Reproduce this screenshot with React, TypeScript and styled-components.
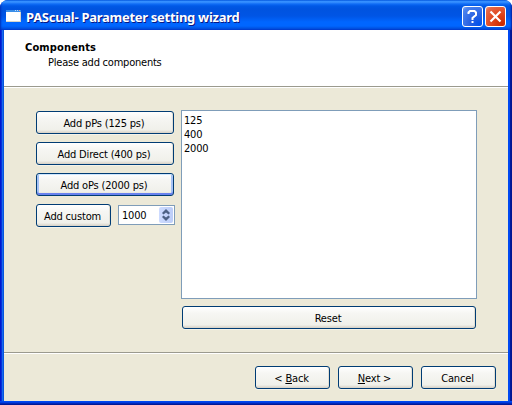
import React from "react";
import styled, { createGlobalStyle, css } from "styled-components";

const Global = createGlobalStyle`
  *, *::before, *::after { box-sizing: border-box; }
  body { margin: 0; background: #fff; }
`;

const uiFont = css`
  font-family: "DejaVu Sans Condensed", "DejaVu Sans", sans-serif;
  font-stretch: condensed;
  font-size: 11px;
  line-height: 14px;
  letter-spacing: -0.17px;
  color: #000;
`;

const Window = styled.div`
  ${uiFont}
  width: 512px;
  height: 405px;
  display: flex;
  flex-direction: column;
  overflow: hidden;
  border-radius: 8px 8px 0 0;
  padding: 0 4px 4px;
  background:
    linear-gradient(180deg, #0048f1 0, #0048f1 1px, #0030d0 2px, #001ea0 3px, #00138c 4px) 0 100% / 100% 4px no-repeat,
    linear-gradient(90deg, #0019cf 0, #0019cf 1px, #0831d9 1px, #0831d9 2px, #166aee 2px, #166aee 3px, #0855dd 3px, #0855dd 508px, #0048f1 508px, #0048f1 510px, #001ea0 510px, #00138c 512px);
`;

const TitleBar = styled.header`
  flex: none;
  height: 30px;
  margin: 0 -4px;
  padding: 0 6px;
  display: flex;
  align-items: center;
  background: linear-gradient(180deg, #0058e0 0, #2f8cff 1px, #3a92ff 2px, #0f6cf5 4px, #0058e6 6px, #0053df 9px, #0055e5 16px, #0066ff 22px, #0066ff 26px, #0055e5 28px, #003dcf 30px);
  box-shadow: inset 2px 0 2px -1px #0030b8, inset -2px 0 2px -1px #001ea0;
`;

const WindowIcon = styled.svg`
  margin-top: 2px;
`;

const Title = styled.h1`
  margin: 3px auto 0 5px;
  font: bold 13px/18px "Noto Sans", sans-serif;
  font-stretch: condensed;
  letter-spacing: -0.28px;
  white-space: nowrap;
  color: #fff;
  text-shadow: 1px 1px #0a1883;
`;

const CaptionButton = styled.span<{ $close?: boolean }>`
  width: 21px;
  height: 21px;
  margin: 3px 0 0 2px;
  border: 1px solid #fff;
  border-radius: 3px;
  background: ${(p) =>
    p.$close
      ? "radial-gradient(circle at 85% 90%, #c92a00 0, #df4218 40%, #e66847 85%, #f0a08a 100%)"
      : "radial-gradient(circle at 85% 90%, #0052ed 0, #2861e2 40%, #4b83ee 85%, #8db0f8 100%)"};
  svg { display: block; }
`;

const Heading = styled.section`
  flex: none;
  height: 56px;
  padding: 10px 0 0 21px;
  background: #fff;
`;

const HeadingTitle = styled.h2`
  margin: 0;
  font-size: 11px;
  line-height: 15px;
  font-weight: bold;
  letter-spacing: 0.14px;
`;

const Subtitle = styled.p`
  margin: 0;
  padding: 1px 0 0 23px;
  letter-spacing: -0.22px;
`;

const Body = styled.main`
  flex: none;
  height: 267px;
  padding: 23px 31px 0 32px;
  display: flex;
  gap: 6px;
  background: #ece9d8;
  border-top: 1px solid #9b9a8e;
  border-bottom: 1px solid #9b9a8e;
  box-shadow: inset 0 1px #fff;
`;

const AddColumn = styled.div`
  width: 139px;
  padding-top: 1px;
  display: flex;
  flex-direction: column;
  gap: 8px;
`;

const Button = styled.button<{ $width: number; $focused?: boolean }>`
  ${uiFont}
  flex: none;
  width: ${(p) => p.$width}px;
  height: 23px;
  padding: 2px 2px 0 0;
  border: 1px solid #003c74;
  border-radius: 3px;
  background: linear-gradient(180deg, #fff, #f6f6f3 30%, #f0f0ea 85%, #d6d0c5);
  box-shadow: ${(p) =>
    p.$focused
      ? "inset 0 1px #cee7ff, inset 0 -2px #6982ee, inset 2px 0 #a6c2f5, inset -2px 0 #a6c2f5"
      : "inset -1px 0 #e2dfd4, 0 1px #f5f3e9"};
  white-space: nowrap;
`;

const CustomRow = styled.div`
  display: flex;
  align-items: center;
  justify-content: space-between;
`;

const SpinBox = styled.div`
  width: 57px;
  height: 20px;
  margin-top: -1px;
  padding: 1px 1px 1px 3px;
  display: flex;
  align-items: center;
  justify-content: space-between;
  border: 1px solid #7f9db9;
  background: #fff;
`;

const SpinValue = styled.span`
  padding-top: 2px;
`;

const SpinArrows = styled.span`
  width: 14px;
  height: 16px;
  border-radius: 2px;
  background: linear-gradient(90deg, #cddbff, #bccdf8);
  svg { display: block; }
`;

const ListColumn = styled.div`
  width: 296px;
  display: flex;
  flex-direction: column;
  gap: 7px;
`;

const ComponentList = styled.ul`
  height: 189px;
  margin: 0;
  padding: 3px 2px;
  list-style: none;
  border: 1px solid #7f9db9;
  background: #fff;
`;

const ResetRow = styled.div`
  display: flex;
  justify-content: center;
`;

const Footer = styled.footer`
  flex: 1;
  padding: 12px 12px 0 0;
  display: flex;
  justify-content: flex-end;
  gap: 8px;
  background: #ece9d8;
  border-top: 1px solid #fff;
`;

const addButtons = [
  { label: "Add pPs (125 ps)" },
  { label: "Add Direct (400 ps)" },
  { label: "Add oPs (2000 ps)", focused: true },
];

const components = [125, 400, 2000];

export default function App() {
  return (
    <>
      <Global />
      <Window>
        <TitleBar>
          <WindowIcon width="15" height="12" shapeRendering="crispEdges">
            <rect width="15" height="12" fill="#fff" />
            <rect width="15" height="2" fill="#3a8ee8" />
            <rect x="9" width="1" height="1" fill="#b8dcff" />
            <rect x="11" width="1" height="1" fill="#b8dcff" />
            <rect x="13" width="1" height="1" fill="#f2a080" />
            <rect x="14" y="2" width="1" height="10" fill="#d8d5ca" />
            <rect y="11" width="15" height="1" fill="#d8d5ca" />
          </WindowIcon>
          <Title>PAScual- Parameter setting wizard</Title>
          <CaptionButton>
            <svg width="19" height="19" fill="none" stroke="#fff" strokeWidth="2">
              <path d="M5.5 7V5.5L7 4h4.5L13 5.5V8l-3.5 3v2M9.5 14v2" />
            </svg>
          </CaptionButton>
          <CaptionButton $close>
            <svg width="19" height="19" fill="none" stroke="#fff" strokeWidth="2.2">
              <path d="M4.5 4.5l10 10M14.5 4.5l-10 10" />
            </svg>
          </CaptionButton>
        </TitleBar>
        <Heading>
          <HeadingTitle>Components</HeadingTitle>
          <Subtitle>Please add components</Subtitle>
        </Heading>
        <Body>
          <AddColumn>
            {addButtons.map((b) => (
              <Button key={b.label} $width={138} $focused={b.focused}>
                {b.label}
              </Button>
            ))}
            <CustomRow>
              <Button $width={75}>Add custom</Button>
              <SpinBox>
                <SpinValue>1000</SpinValue>
                <SpinArrows>
                  <svg width="14" height="16" fill="#4d6185">
                    <path d="M7 2l4 4-1.5 1.5L7 5.5 4.5 7.5 3 6zM7 14l4-4-1.5-1.5L7 10.5 4.5 8.5 3 10z" />
                  </svg>
                </SpinArrows>
              </SpinBox>
            </CustomRow>
          </AddColumn>
          <ListColumn>
            <ComponentList>
              {components.map((c) => (
                <li key={c}>{c}</li>
              ))}
            </ComponentList>
            <ResetRow>
              <Button $width={294}>Reset</Button>
            </ResetRow>
          </ListColumn>
        </Body>
        <Footer>
          <Button $width={75}>&lt; <u>B</u>ack</Button>
          <Button $width={75}><u>N</u>ext &gt;</Button>
          <Button $width={75}>Cancel</Button>
        </Footer>
      </Window>
    </>
  );
}
